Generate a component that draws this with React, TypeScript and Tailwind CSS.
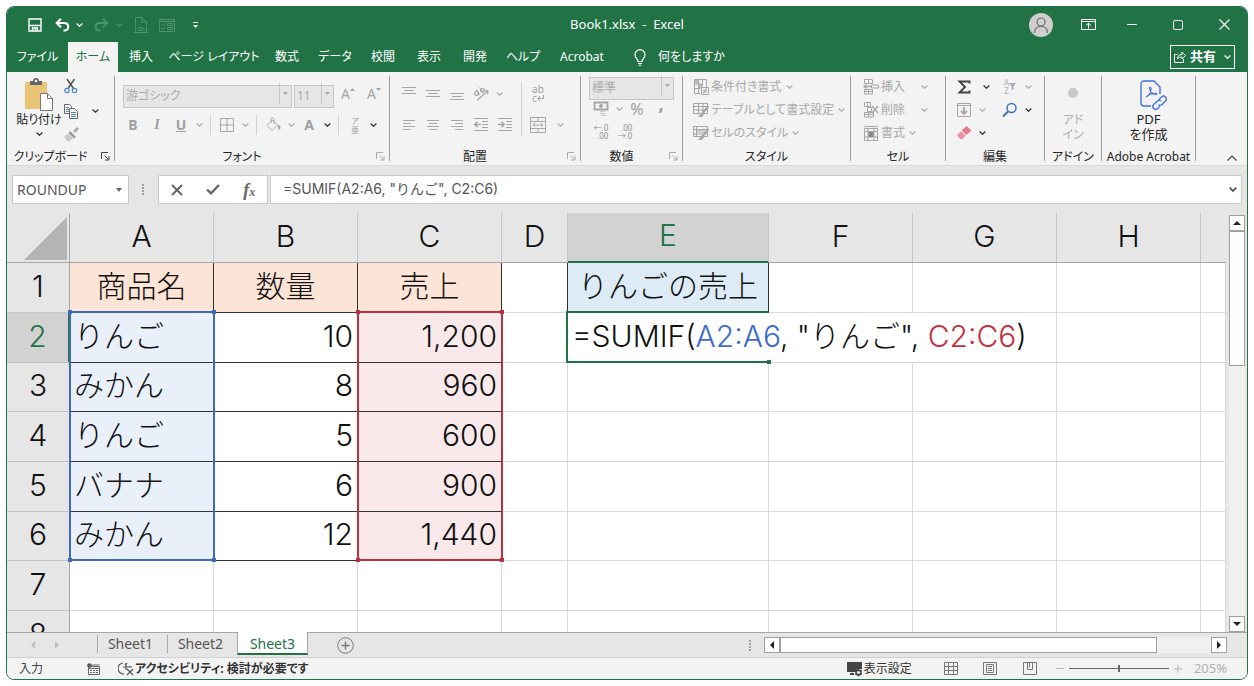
import { ReactNode } from 'react'
import clsx from 'clsx'

const menuTabs = [
  { label: 'ファイル', width: 'w-[61px]' },
  { label: 'ホーム', width: 'w-[50px]', active: true },
  { label: '挿入', width: 'w-[46px]' },
  { label: 'ページ レイアウト', width: 'w-[100px]' },
  { label: '数式', width: 'w-[46px]' },
  { label: 'データ', width: 'w-[50px]' },
  { label: '校閲', width: 'w-[46px]' },
  { label: '表示', width: 'w-[46px]' },
  { label: '開発', width: 'w-[46px]' },
  { label: 'ヘルプ', width: 'w-[50px]' },
  { label: 'Acrobat', width: 'w-[68px]' },
]

const columns = [
  { name: 'A', width: 'w-[144px]' },
  { name: 'B', width: 'w-[144px]' },
  { name: 'C', width: 'w-[144px]' },
  { name: 'D', width: 'w-[66px]' },
  { name: 'E', width: 'w-[201px]' },
  { name: 'F', width: 'w-[144px]' },
  { name: 'G', width: 'w-[144px]' },
  { name: 'H', width: 'w-[144px]' },
  { name: '', width: '' },
]

const items = [
  ['りんご', '10', '1,200'],
  ['みかん', '8', '960'],
  ['りんご', '5', '600'],
  ['バナナ', '6', '900'],
  ['みかん', '12', '1,440'],
]

function Chevron({ className = 'text-[#b0b0b0]' }: { className?: string }) {
  return (
    <svg className={clsx('h-1 w-[7px] shrink-0', className)} viewBox="0 0 7 4" fill="none" stroke="currentColor" strokeWidth="1.2">
      <path d="M.6.5 3.5 3.3 6.4.5" />
    </svg>
  )
}

function Icon({ children, className = 'text-[#a8a4a8]' }: { children: ReactNode; className?: string }) {
  return (
    <svg className={clsx('size-4 shrink-0', className)} viewBox="0 0 16 16" fill="none" stroke="currentColor">
      {children}
    </svg>
  )
}

/* Square ribbon button with only an icon in it */
function Tool({ label, children }: { label: string; children: ReactNode }) {
  return (
    <button aria-label={label} className="flex h-[23px] w-6 shrink-0 items-center justify-center">
      {children}
    </button>
  )
}

function More({ label, dark }: { label: string; dark?: boolean }) {
  return (
    <button aria-label={label} className="flex h-[23px] w-3 shrink-0 items-center justify-center">
      <Chevron className={dark ? 'text-[#333]' : 'text-[#b0b0b0]'} />
    </button>
  )
}

function Divider() {
  return (
    <span className="flex w-[10px] shrink-0 justify-center">
      <span className="h-5 w-px bg-[#d0d0d0]" />
    </span>
  )
}

function Combo({ label, value, className }: { label: string; value: string; className: string }) {
  return (
    <span className={clsx('relative block h-[23px] shrink-0', className)}>
      <select aria-label={label} className="h-full w-full appearance-none border border-[#c6c6c6] bg-[#e6e6e6] pl-0.5 text-xs text-[#aaa]">
        <option>{value}</option>
      </select>
      <span className="pointer-events-none absolute inset-y-px right-px flex w-3 items-center justify-center border-l border-[#c6c6c6]">
        <svg className="h-[3px] w-[5px]" viewBox="0 0 5 3" fill="#aaa">
          <path d="M0 0h5L2.5 3z" />
        </svg>
      </span>
    </span>
  )
}

function Launcher({ dark }: { dark?: boolean }) {
  return (
    <button aria-label="ダイアログを表示" className="absolute right-1 bottom-0">
      <svg className={clsx('size-[9px]', dark ? 'text-[#444]' : 'text-[#aaa]')} viewBox="0 0 9 9" fill="none" stroke="currentColor">
        <path d="M.5 7V.5H7M3.5 3.5l4 4M8 4v4H4" />
      </svg>
    </button>
  )
}

function Group({ title, className, launcher, children }: { title: string; className: string; launcher?: 'dark' | 'light'; children: ReactNode }) {
  return (
    <section className={clsx('mt-1 mb-1 flex shrink-0 flex-col justify-between border-r border-[#9a9a9a]', className)}>
      <div>{children}</div>
      <div className={clsx('relative flex h-2 items-center justify-center text-xs leading-3 whitespace-nowrap text-[#262626]', launcher && 'pr-5')}>
        {title}
        {launcher && <Launcher dark={launcher === 'dark'} />}
      </div>
    </section>
  )
}

function TitleBar() {
  return (
    <div className="grid h-[35px] grid-cols-[1fr_auto_1fr] items-center">
      <div className="flex items-center pl-5 text-white">
        <button aria-label="上書き保存" className="flex w-4 justify-center">
          <svg className="size-[14px]" viewBox="0 0 14 14" fill="none" stroke="currentColor" strokeWidth="1.4">
            <path d="M1 1h12v12H1zM1 7.5h12M4.5 13v-3h5v3M7.5 10.5V13" />
          </svg>
        </button>
        <button aria-label="元に戻す" className="ml-3 flex w-4 justify-center">
          <Icon className="text-white">
            <path d="M1.5 6H10a4 3.8 0 0 1 0 7.5H8.5M6 1.8 1.6 6 6 10.2" strokeWidth="2" />
          </Icon>
        </button>
        <button aria-label="元に戻す一覧" className="ml-0.5 flex w-3 justify-center">
          <Chevron className="text-white" />
        </button>
        <button aria-label="やり直し" className="ml-2 flex w-4 justify-center">
          <Icon className="text-[#4e9469]">
            <path d="M14.5 6H6a4 3.8 0 0 0 0 7.5h1.5M10 1.8 14.4 6 10 10.2" strokeWidth="1.8" />
          </Icon>
        </button>
        <button aria-label="やり直し一覧" className="ml-1 flex w-3 justify-center">
          <Chevron className="text-[#4e9469]" />
        </button>
        <button aria-label="印刷プレビュー" className="ml-2 flex w-4 justify-center">
          <Icon className="text-[#4e9469]">
            <path d="M2.5 9V.5H9L13.5 5v4M9 .5V5h4.5M2.5 10v5M13.5 10v5M1 15.5h14M6 10.5h4v3H6zM4 12h1M11 12h1" />
          </Icon>
        </button>
        <button aria-label="フォーム" className="ml-2.5 flex w-4 justify-center">
          <Icon className="text-[#4e9469]">
            <path d="M.5 2.5h15v12H.5zM.5 4.5h15M2.5 8h4M2.5 11.5h4M8.5 6.5h5v2h-5zM8.5 10.5h5v2h-5z" />
          </Icon>
        </button>
        <button aria-label="クイック アクセスのカスタマイズ" className="ml-3 flex w-4 justify-center">
          <svg className="h-[6px] w-[5px]" viewBox="0 0 5 6" fill="currentColor">
            <path d="M0 0h5v1H0zM0 3h5L2.5 6z" />
          </svg>
        </button>
      </div>
      <h1 className="text-[13px] whitespace-pre text-white">Book1.xlsx  -  Excel</h1>
      <div className="flex items-center justify-end text-white">
        <button aria-label="アカウント" className="mr-7 flex size-6 items-center justify-center rounded-full bg-[#cfcfcf]">
          <svg className="size-[18px] text-[#6b6b6b]" viewBox="0 0 18 18" fill="none" stroke="currentColor" strokeWidth="1.2">
            <circle cx="9" cy="6" r="4" />
            <path d="M2.5 17c0-4 2.5-6.5 6.5-6.5s6.5 2.5 6.5 6.5" />
          </svg>
        </button>
        <button aria-label="リボンの表示オプション" className="flex w-7 justify-start">
          <svg className="h-[11px] w-[15px]" viewBox="0 0 15 11" fill="none" stroke="currentColor">
            <path d="M.5.5h14v10H.5zM.5 2.5h14M7.5 9.5v-5M5 6.5l2.5-2.3L10 6.5" />
          </svg>
        </button>
        <button aria-label="最小化" className="flex w-[46px] justify-center">
          <span className="h-px w-[10px] bg-white" />
        </button>
        <button aria-label="最大化" className="flex w-[46px] justify-center">
          <span className="size-[10px] rounded-xs border border-white" />
        </button>
        <button aria-label="閉じる" className="flex w-[46px] justify-center">
          <svg className="size-[11px]" viewBox="0 0 11 11" stroke="currentColor" strokeWidth="1.2">
            <path d="M.5.5l10 10M10.5.5l-10 10" />
          </svg>
        </button>
      </div>
    </div>
  )
}

function MenuBar() {
  return (
    <nav className="flex h-[30px] items-stretch text-xs whitespace-nowrap text-white">
      {menuTabs.map((tab) => (
        <button
          key={tab.label}
          className={clsx('shrink-0', tab.width, tab.active && 'bg-[#f3f3f3] text-[#217346]')}
        >
          {tab.label}
        </button>
      ))}
      <button className="flex items-center gap-3 pl-[18px]">
        <svg className="h-[17px] w-3" viewBox="0 0 12 17" fill="none" stroke="currentColor" strokeWidth="1.2">
          <path d="M4 12.5c0-2.5-3-3.5-3-6.8a5 5 0 0 1 10 0c0 3.3-3 4.3-3 6.8zM4 14.5h4M4.8 16.4h2.4" />
        </svg>
        何をしますか
      </button>
      <button className="my-[3px] mr-3 ml-auto flex items-center gap-1 border border-white px-[3px] text-[13px] font-bold">
        <svg className="size-3" viewBox="0 0 12 12" fill="none" stroke="currentColor">
          <path d="M3.5 3.5h-3v8h9V8M3.5 8c0-3 1.5-4.5 4.5-4.5V1l3.5 3.5L8 8V6C6 6 4.5 6.5 3.5 8z" />
        </svg>
        共有
        <span className="pl-1">
          <Chevron className="text-white" />
        </span>
      </button>
    </nav>
  )
}

function ClipboardGroup() {
  return (
    <Group title="クリップボード" className="w-[108px]" launcher="dark">
      <div className="flex">
        <button className="flex w-14 flex-col items-center pt-0.5 pl-2 text-xs leading-[18px] whitespace-nowrap text-[#262626]">
          <svg className="h-[33px] w-7" viewBox="0 0 28 33" fill="none">
            <path d="M0 4h22v27H0z" fill="#ebc577" />
            <path d="M5 3h3a3 3 0 0 1 6 0h3v4H5z" fill="#666" />
            <circle cx="11" cy="3" r="1.2" fill="#fff" />
            <path d="M15.5 15.5h7l5 5v12h-12z" fill="#fff" stroke="#777" />
            <path d="M22.5 15.5v5h5" stroke="#777" />
          </svg>
          貼り付け
          <span className="flex h-2.5 items-center">
            <Chevron className="text-[#333]" />
          </span>
        </button>
        <div className="flex h-[69px] w-4 flex-col justify-between py-0.5">
          <button aria-label="切り取り">
            <Icon>
              <path d="M4 1l6.5 9.5M11.5 1 5 10.5" stroke="#555" strokeWidth="1.5" />
              <circle cx="4" cy="12.5" r="2.2" stroke="#4a86c5" strokeWidth="1.2" />
              <circle cx="11.5" cy="12.5" r="2.2" stroke="#4a86c5" strokeWidth="1.2" />
            </Icon>
          </button>
          <button aria-label="コピー">
            <Icon>
              <path d="M1.5 1.5h5l2 2v7h-7z" stroke="#666" fill="#fff" />
              <path d="M6.5 5.5h5l3 3v7h-8z" stroke="#666" fill="#fff" />
              <path d="M3 4.5h3M3 6.5h3M3 8.5h3M8 9.5h5M8 11.5h5M8 13.5h5" stroke="#4a86c5" />
            </Icon>
          </button>
          <button aria-label="書式のコピー/貼り付け">
            <Icon>
              <path d="M15 1l-4 4" stroke="#aaa" strokeWidth="2.5" />
              <path d="M7 4l6 6-2 1.5L5.5 6z" fill="#999" stroke="none" />
              <path d="M5 6.5 10 11.5 5 15 1 10z" fill="#c9c9c9" stroke="none" />
            </Icon>
          </button>
        </div>
        <div className="flex h-[69px] items-center pl-2.5">
          <More label="コピーのオプション" dark />
        </div>
      </div>
    </Group>
  )
}

function FontGroup() {
  return (
    <Group title="フォント" className="w-[275px]" launcher="light">
      <div className="flex gap-0.5 pt-1.5 pl-2">
        <Combo label="フォント" value="游ゴシック" className="w-[169px]" />
        <Combo label="フォント サイズ" value="11" className="w-10" />
        <Tool label="フォント サイズの拡大">
          <span className="text-sm text-[#a5a5a5]">A</span>
          <svg className="mb-2 h-[3px] w-[5px]" viewBox="0 0 5 3" fill="#a5a5a5"><path d="M0 3h5L2.5 0z" /></svg>
        </Tool>
        <Tool label="フォント サイズの縮小">
          <span className="text-sm text-[#a5a5a5]">A</span>
          <svg className="mb-2 h-[3px] w-[5px]" viewBox="0 0 5 3" fill="#a5a5a5"><path d="M0 0h5L2.5 3z" /></svg>
        </Tool>
      </div>
      <div className="flex items-center pt-2 pl-1.5 text-sm text-[#a0a0a0]">
        <Tool label="太字"><b>B</b></Tool>
        <Tool label="斜体"><i className="font-['Liberation_Serif',serif] font-bold">I</i></Tool>
        <Tool label="下線"><b className="underline">U</b></Tool>
        <More label="下線の種類" />
        <Divider />
        <Tool label="罫線">
          <Icon><path d="M1.5 1.5h13v13h-13zM8 1.5v13M1.5 8h13" /></Icon>
        </Tool>
        <More label="罫線の種類" />
        <Divider />
        <Tool label="塗りつぶしの色">
          <Icon>
            <path d="M2 8.5 7.5 3l5 5L7 13.5zM6 6V2.5a1.5 1.5 0 0 1 3 0V7" />
            <path d="M14 8c1 2 1.5 3 .5 4s-2-.5-.5-4z" fill="currentColor" />
          </Icon>
        </Tool>
        <More label="塗りつぶしの色の一覧" />
        <Tool label="フォントの色"><b>A</b></Tool>
        <More label="フォントの色の一覧" dark />
        <Divider />
        <Tool label="ふりがなの表示">
          <span className="flex flex-col text-[8px] leading-[9px]"><span>ア</span><span>亜</span></span>
        </Tool>
        <More label="ふりがなの設定" dark />
      </div>
    </Group>
  )
}

function AlignGroup() {
  return (
    <Group title="配置" className="w-[191px]" launcher="light">
      <div className="flex pt-1.5 pl-[7px]">
        <div className="w-[124px]">
          <div className="flex">
            <Tool label="上揃え"><Icon><path d="M1 1.5h14M3 4.5h10M1 7.5h14" /></Icon></Tool>
            <Tool label="上下中央揃え"><Icon><path d="M1 4.5h14M3 7.5h10M1 10.5h14" /></Icon></Tool>
            <Tool label="下揃え"><Icon><path d="M1 7.5h14M3 10.5h10M1 13.5h14" /></Icon></Tool>
            <Tool label="方向">
              <Icon>
                <path d="M4 14.5 14.5 5M10.5 4.5h4.2v4" strokeWidth="1.2" />
                <circle cx="3.5" cy="7.5" r="2" strokeWidth="1.2" />
                <path d="M6.5 8.5l-3-5M6.5 1.5l3.5 5" strokeWidth="1.2" />
                <circle cx="9.5" cy="4.5" r="1.8" strokeWidth="1.2" />
              </Icon>
            </Tool>
            <More label="方向の一覧" />
          </div>
          <div className="flex pt-2">
            <Tool label="左揃え"><Icon><path d="M2 3.5h12M2 6.5h8M2 9.5h12M2 12.5h8" /></Icon></Tool>
            <Tool label="中央揃え"><Icon><path d="M2 3.5h12M4 6.5h8M2 9.5h12M4 12.5h8" /></Icon></Tool>
            <Tool label="右揃え"><Icon><path d="M2 3.5h12M6 6.5h8M2 9.5h12M6 12.5h8" /></Icon></Tool>
            <Tool label="インデントを減らす">
              <Icon>
                <path d="M1 1.5h14M9 4.5h6M9 7.5h6M9 10.5h6M1 13.5h14" />
                <path d="M8 7.5H2M4.5 4.8 1.8 7.5l2.7 2.7" strokeWidth="1.6" />
              </Icon>
            </Tool>
            <Tool label="インデントを増やす">
              <Icon>
                <path d="M1 1.5h14M9 4.5h6M9 7.5h6M9 10.5h6M1 13.5h14" />
                <path d="M1 7.5h6M4.5 4.8 7.2 7.5l-2.7 2.7" strokeWidth="1.6" />
              </Icon>
            </Tool>
          </div>
        </div>
        <span className="h-[54px] w-px bg-[#d0d0d0]" />
        <div className="pl-1">
          <Tool label="折り返して全体を表示する">
            <span className="flex flex-col text-[10px] leading-[9px] text-[#a0a0a0]">
              <span>ab</span>
              <span className="flex items-center">
                c
                <svg className="h-[6px] w-[7px]" viewBox="0 0 7 6" fill="none" stroke="currentColor">
                  <path d="M6.5 0v3.5H1M3 1 .8 3.5 3 6" />
                </svg>
              </span>
            </span>
          </Tool>
          <div className="flex gap-1 pt-2">
            <Tool label="セルを結合して中央揃え">
              <Icon>
                <path d="M.5.5h15v15H.5zM.5 4.5h15M.5 11.5h15M8 .5v4M8 11.5v4M3 8h10M5 6 3 8l2 2M11 6l2 2-2 2" />
              </Icon>
            </Tool>
            <More label="セルの結合の一覧" />
          </div>
        </div>
      </div>
    </Group>
  )
}

function NumberGroup() {
  return (
    <Group title="数値" className="w-[102px]" launcher="light">
      <div className="-mt-0.5 pl-2">
        <Combo label="表示形式" value="標準" className="w-[85px]" />
        <div className="flex text-base text-[#a0a0a0]">
          <Tool label="通貨表示形式">
            <Icon>
              <path d="M1.5 1.5h13v7h-13z" strokeWidth="1.8" />
              <circle cx="8" cy="5" r="1.5" fill="currentColor" />
              <path d="M7 10.5h5M7 12.5h5M8 14.5h5" stroke="#c8c8c8" />
            </Icon>
          </Tool>
          <More label="通貨の一覧" />
          <Tool label="パーセント スタイル">%</Tool>
          <Tool label="桁区切りスタイル"><b className="pb-3 text-xl">,</b></Tool>
        </div>
        <div className="flex text-[8px] leading-[8px] text-[#909090]">
          <Tool label="小数点以下の表示桁数を増やす"><span className="text-right">←.0<br />.00</span></Tool>
          <Tool label="小数点以下の表示桁数を減らす"><span className="text-right">.00<br />→.0</span></Tool>
        </div>
      </div>
    </Group>
  )
}

function WideTool({ icon, label, wideGap }: { icon: ReactNode; label: string; wideGap?: boolean }) {
  return (
    <button className={clsx('flex h-[23px] items-center text-xs whitespace-nowrap text-[#a8a8a8]', wideGap ? 'gap-4' : 'gap-1')}>
      <span className="flex items-center gap-0.5">
        {icon}
        {label}
      </span>
      <Chevron />
    </button>
  )
}

function StyleGroup() {
  return (
    <Group title="スタイル" className="w-[168px]">
      <div className="-mt-px pl-2.5">
        <WideTool
          label="条件付き書式"
          icon={<Icon><path d="M1.5.5h12v7M1.5.5v14h6M1.5 5h7M1.5 9.5h6M5.5.5v14M9.5.5V7" /><path d="M2 1h3v4H2zM6 5h3v4H6z" fill="#bbb" stroke="none" /><path d="M8.5 8.5h7v7h-7zM10 11h4M10 13h4M13.5 9.5l-3 5" /></Icon>}
        />
        <WideTool
          label="テーブルとして書式設定"
          icon={<Icon><path d="M.5 1.5h14v10H.5zM.5 4.5h14M.5 8h14M5.5 1.5v10M10 1.5v10" /><path d="M15.5 4 10 10.5" strokeWidth="2" /><path d="M10 9l2 2-3 4H5z" fill="#a8a8a8" stroke="none" /></Icon>}
        />
        <WideTool
          label="セルのスタイル"
          icon={<Icon><path d="M.5 1.5h14v10H.5zM.5 4.5h14M.5 9h14M3.5 1.5v10" /><path d="M4 5h8v4H4z" fill="#d0d0d0" stroke="none" /><path d="M15.5 4 10 10.5" strokeWidth="2" /><path d="M10 9l2 2-3 4H5z" fill="#a8a8a8" stroke="none" /></Icon>}
        />
      </div>
    </Group>
  )
}

function CellGroup() {
  return (
    <Group title="セル" className="w-[95px]">
      <div className="-mt-px pl-3">
        <WideTool
          wideGap
          label="挿入"
          icon={<Icon><path d="M1.5.5h8v4h-8zM5.5.5v4M1.5 10.5h8V15h-8zM1.5 12.5h8M5.5 10.5V15M8.5 6h7v3h-7z" /><path d="M8 7.5H1M3.5 5.5l-2.5 2 2.5 2" strokeWidth="1.3" /></Icon>}
        />
        <WideTool
          wideGap
          label="削除"
          icon={<Icon><path d="M1.5.5h6v4h-6zM4.5.5v4M1.5 10.5h9V15h-9zM1.5 12.5h9M5.5 10.5V15M4.5 5.5h4v4h-4z" /><path d="M9 4l6 7M15 4 9 11" strokeWidth="1.4" /></Icon>}
        />
        <WideTool
          label="書式"
          icon={<Icon><path d="M1.5 3.5h13v12h-13zM1.5 6.5h13M1.5 12h13M5 3.5v12M11 3.5v12M2 .5v2M14 .5v2M3 1.5h10" /><path d="M5.5 7h5v5h-5z" fill="#888" stroke="none" /></Icon>}
        />
      </div>
    </Group>
  )
}

function EditGroup() {
  return (
    <Group title="編集" className="w-[99px]">
      <div className="-mt-px grid grid-cols-[46px_1fr] pl-1.5">
        <div className="flex">
          <Tool label="オート SUM">
            <Icon className="text-[#444]"><path d="M13.5 4.5v-2h-10L9 8l-5.5 5.5h10v-2" strokeWidth="1.9" /></Icon>
          </Tool>
          <span className="pl-1"><More label="集計方法" dark /></span>
        </div>
        <div className="flex">
          <Tool label="並べ替えとフィルター">
            <span className="flex items-center text-[8px] leading-[8px] text-[#aaa]">
              <span>A<br />Z</span>
              <svg className="size-[7px]" viewBox="0 0 7 7" fill="currentColor"><path d="M0 0h7L4.5 3v4l-2-1V3z" /></svg>
            </span>
          </Tool>
          <More label="並べ替えの一覧" />
        </div>
        <div className="flex">
          <Tool label="フィル"><Icon><path d="M1.5 1.5h13v13h-13zM1.5 3.5h13" /><path d="M8 5v7M5 9l3 3 3-3" strokeWidth="1.8" /></Icon></Tool>
          <More label="フィルの一覧" />
        </div>
        <div className="flex">
          <Tool label="検索と選択">
            <Icon className="text-[#3d73b5]"><circle cx="9.5" cy="6" r="4.5" strokeWidth="1.5" /><path d="M6 9.5l-5 5" strokeWidth="2" /></Icon>
          </Tool>
          <More label="検索の一覧" dark />
        </div>
        <div className="flex">
          <Tool label="クリア">
            <Icon><path d="M10.5 1l5 4.5-5 4.5-5-4.5z" fill="#e4798f" stroke="none" /><path d="M4.7 6.2l5 4.5-3.2 3.3h-2L1 10.5z" fill="#e98fa1" stroke="none" /></Icon>
          </Tool>
          <More label="クリアの一覧" dark />
        </div>
      </div>
    </Group>
  )
}

function Ribbon() {
  return (
    <div className="flex h-[93px] shrink-0 overflow-hidden bg-[#f3f3f3]">
      <ClipboardGroup />
      <FontGroup />
      <AlignGroup />
      <NumberGroup />
      <StyleGroup />
      <CellGroup />
      <EditGroup />
      <Group title="アドイン" className="w-[57px]">
        <button className="flex w-full flex-col items-center text-xs leading-[15px] text-[#b0b0b0]">
          <span className="mt-3 mb-3.5 size-[10px] rounded-full bg-[#c8c8c8]" />
          アド<br />イン
        </button>
      </Group>
      <Group title="Adobe Acrobat" className="w-[94px]">
        <button className="flex w-full flex-col items-center pt-1 text-[13px] leading-[15px] text-[#262626]">
          <svg className="mb-0.5 ml-2 h-[30px] w-7" viewBox="0 0 28 30" fill="none" stroke="#3f6fe0" strokeWidth="1.4">
            <path d="M12 26H5a3 3 0 0 1-3-3V4a3 3 0 0 1 3-3h10l6 6v7M15 1" />
            <path d="M7 17c3-1 6-6 5-9-.3-1-1.500-1-1.500 0 0 3 3 6.500 6.500 6.500 1 0 1-1.300 0-1.300-3.500 0-7 1-10 3.800z" strokeWidth="1.1" />
            <path d="M20 19.5l2.500-2.500a2.800 2.800 0 0 1 4 4L23 24.500a2.800 2.800 0 0 1-3.500.3M22 21a2.800 2.800 0 0 0-3.800.3L14.700 24.500a2.800 2.800 0 0 0 4 4l2-2" />
          </svg>
          PDF<br />を作成
        </button>
      </Group>
      <div className="flex flex-1 items-end justify-end pr-2.5 pb-1">
        <button aria-label="リボンを折りたたむ">
          <svg className="h-[6px] w-[10px]" viewBox="0 0 10 6" fill="none" stroke="#444" strokeWidth="1.2">
            <path d="M.5 5.5 5 1l4.5 4.5" />
          </svg>
        </button>
      </div>
    </div>
  )
}

function Dots() {
  return (
    <svg className="h-[11px] w-[3px] shrink-0" viewBox="0 0 3 11" fill="#a0a0a0">
      <path d="M0 0h2v2H0zM0 3h2v2H0zM0 6h2v2H0zM0 9h2v2H0z" />
    </svg>
  )
}

function FormulaBar() {
  return (
    <div className="flex h-12 shrink-0 items-start border-t border-[#dadada] bg-[#e6e6e6] px-[5px] pt-[9px]">
      <div className="flex h-[29px] w-[117px] items-center border border-[#c8c8c8] bg-white pr-1.5">
        <input
          aria-label="名前ボックス"
          defaultValue="ROUNDUP"
          className="w-full min-w-0 pl-1 text-sm text-[#555] outline-none"
        />
        <svg className="h-1 w-[6px] shrink-0" viewBox="0 0 6 4" fill="#666"><path d="M0 0h6L3 4z" /></svg>
      </div>
      <div className="flex h-[29px] w-[29px] items-center justify-center">
        <Dots />
      </div>
      <div className="flex h-[29px] w-[110px] items-center justify-around border border-[#c8c8c8] bg-white">
        <button aria-label="キャンセル">
          <svg className="size-3" viewBox="0 0 12 12" stroke="#666" strokeWidth="2"><path d="M1 1l10 10M11 1 1 11" /></svg>
        </button>
        <button aria-label="入力">
          <svg className="h-[11px] w-[14px]" viewBox="0 0 14 11" fill="none" stroke="#666" strokeWidth="2.4"><path d="M1 5.5 5 9.3 13 1" /></svg>
        </button>
        <button aria-label="関数の挿入" className="font-['Liberation_Serif',serif] text-lg leading-5 font-bold text-[#666] italic">
          f<span className="text-xs">x</span>
        </button>
      </div>
      <div className="ml-0.5 flex h-[29px] flex-1 items-center border border-[#c8c8c8] bg-white pr-1">
        <input
          aria-label="数式バー"
          defaultValue={'=SUMIF(A2:A6, "りんご", C2:C6)'}
          className="w-full min-w-0 pb-0.5 pl-3 font-['Inter','Noto_Sans_CJK_JP',sans-serif] text-sm text-[#555] outline-none [font-feature-settings:normal]"
        />
        <button aria-label="数式バーの展開">
          <svg className="h-[5px] w-2" viewBox="0 0 8 5" fill="none" stroke="#555" strokeWidth="1.8"><path d="M.7.7 4 4 7.3.7" /></svg>
        </button>
      </div>
    </div>
  )
}

/* Coloured frame round a referenced range, with a handle on its corners */
function RangeFrame({ frame, handle }: { frame: string; handle: string }) {
  return (
    <span className={clsx('pointer-events-none absolute -top-0.5 -left-px h-[250px] w-[146px] border-2', frame)}>
      <i className={clsx('absolute -top-[3px] -left-[3px] size-1', handle)} />
      <i className={clsx('absolute -top-[3px] -right-[3px] size-1', handle)} />
      <i className={clsx('absolute -bottom-[3px] -left-[3px] size-1', handle)} />
      <i className={clsx('absolute -right-[3px] -bottom-[3px] size-1', handle)} />
    </span>
  )
}

function RowHead({ n, active }: { n: number; active?: boolean }) {
  return (
    <th
      scope="row"
      className={clsx(
        'border-r border-b border-b-[#c4c4c4] p-0 pb-1 text-center font-light',
        active ? 'border-r-2 border-r-[#217346] bg-[#d2d2d2] text-[#217346]' : 'border-r-[#a6a6a6] bg-[#e6e6e6]'
      )}
    >
      {n}
    </th>
  )
}

function Blank({ count }: { count: number }) {
  return (
    <>
      {Array.from({ length: count }, (_, i) => (
        <td key={i} className="border-r border-b border-[#d9d9d9]" />
      ))}
    </>
  )
}

function Sheet() {
  return (
    <div className="min-w-0 flex-1 overflow-hidden bg-[#e6e6e6]">
      <table className="w-full table-fixed border-separate border-spacing-0 bg-white text-[30px] leading-10 font-light text-[#111]">
        <colgroup>
          <col className="w-[63px]" />
          {columns.map((col, i) => (
            <col key={i} className={col.width} />
          ))}
        </colgroup>
        <thead>
          <tr className="h-[50px] bg-[#e6e6e6]">
            <th className="border-r border-b border-[#a6a6a6] p-0">
              <button aria-label="すべて選択" className="flex h-[49px] w-full items-end justify-end pr-0.5 pb-0.5">
                <svg className="size-[43px]" viewBox="0 0 43 43" fill="#b4b4b4"><path d="M43 0v43H0z" /></svg>
              </button>
            </th>
            {columns.map((col, i) => (
              <th
                key={i}
                scope="col"
                className={clsx(
                  'p-0 pb-1 text-center font-light',
                  col.name === 'E' ? 'border-r border-b-2 border-r-[#c4c4c4] border-b-[#217346] bg-[#d2d2d2] text-[#217346]' : 'border-b border-b-[#a6a6a6]',
                  col.name !== 'E' && col.name !== '' && 'border-r border-r-[#c4c4c4]'
                )}
              >
                {col.name}
              </th>
            ))}
          </tr>
        </thead>
        <tbody className="[&_td]:p-0 [&_td]:pb-1 [&>tr]:h-[50px] [&>tr:nth-child(3n)]:h-[49px]">
          <tr>
            <RowHead n={1} />
            <td className="border-r border-b border-[#333] bg-[#fce4d6] text-center">商品名</td>
            <td className="border-r border-b border-[#333] bg-[#fce4d6] text-center">数量</td>
            <td className="border-r border-b border-[#333] bg-[#fce4d6] text-center">売上</td>
            <td className="border-r border-b border-r-[#333] border-b-[#d9d9d9]" />
            <td className="border-r border-b border-[#333] bg-[#ddebf7] text-center whitespace-nowrap">りんごの売上</td>
            <Blank count={4} />
          </tr>
          {items.map(([name, amount, sales], i) => (
            <tr key={i}>
              <RowHead n={i + 2} active={i === 0} />
              <td className={clsx('border-r border-b border-[#333] bg-[#e9f0fa]', i === 0 && 'relative')}>
                <span className="pl-1">{name}</span>
                {i === 0 && <RangeFrame frame="border-[#3f6bbd]" handle="bg-[#3f6bbd]" />}
              </td>
              <td className="border-r border-b border-[#333] text-right">
                <span className="pr-1">{amount}</span>
              </td>
              <td className={clsx('border-r border-b border-[#333] bg-[#f9e9ea] text-right', i === 0 && 'relative')}>
                <span className="pr-1">{sales}</span>
                {i === 0 && <RangeFrame frame="border-[#b8323f]" handle="bg-[#b8323f]" />}
              </td>
              <Blank count={1} />
              {i === 0 ? (
                <>
                  <td colSpan={3} className="relative border-r border-b border-[#d9d9d9] whitespace-nowrap">
                    <span className="pl-1">
                      =SUMIF(<span className="text-[#3f6bc8]">A2:A6</span>, "りんご", <span className="text-[#c0323f]">C2:C6</span>)
                    </span>
                    <span className="pointer-events-none absolute -top-0.5 -left-0.5 h-[52px] w-[203px] border-2 border-r-0 border-[#217346]">
                      <i className="absolute -right-0.5 -bottom-[3px] size-1 bg-[#217346]" />
                    </span>
                  </td>
                  <Blank count={2} />
                </>
              ) : (
                <Blank count={5} />
              )}
            </tr>
          ))}
          <tr>
            <RowHead n={7} />
            <Blank count={9} />
          </tr>
          <tr>
            <RowHead n={8} />
            <Blank count={9} />
          </tr>
        </tbody>
      </table>
    </div>
  )
}

function Arrow({ d }: { d: string }) {
  return (
    <svg className="size-2" viewBox="0 0 8 8" fill="#222">
      <path d={d} />
    </svg>
  )
}

function SheetTabs() {
  return (
    <div className="flex h-[25px] shrink-0 items-stretch border-t border-[#a6a6a6] bg-[#e6e6e6] text-sm text-[#555]">
      <div className="flex w-[90px] items-center gap-4 pl-[22px]">
        <button aria-label="前のシート">
          <svg className="size-2" viewBox="0 0 8 8" fill="#bdbdbd"><path d="M6 0v8L2 4z" /></svg>
        </button>
        <button aria-label="次のシート">
          <svg className="size-2" viewBox="0 0 8 8" fill="#bdbdbd"><path d="M2 0v8l4-4z" /></svg>
        </button>
      </div>
      {['Sheet1', 'Sheet2'].map((name) => (
        <button key={name} className="mt-0.5 mb-1 w-[70px] border-l border-[#a6a6a6] pr-1 leading-[18px]">{name}</button>
      ))}
      <button className="-mt-px mb-0.5 w-[71px] border-r border-b-2 border-l border-r-[#a6a6a6] border-b-[#217346] border-l-[#a6a6a6] bg-white pt-0.5 leading-[18px] text-[#217346]">
        Sheet3
      </button>
      <button aria-label="新しいシート" className="ml-[29px]">
        <svg className="size-[17px]" viewBox="0 0 17 17" fill="none" stroke="#777">
          <circle cx="8.5" cy="8.5" r="7.8" />
          <path d="M8.5 4.5v8M4.5 8.5h8" strokeWidth="1.4" />
        </svg>
      </button>
      <div className="ml-auto flex w-[498px] items-center">
        <Dots />
        <div className="ml-3 flex h-4 flex-1 bg-[#f0f0f0]">
          <button aria-label="左へスクロール" className="flex w-4 items-center justify-center border border-[#a0a0a0] bg-white">
            <Arrow d="M6 0v8L2 4z" />
          </button>
          <div className="w-[377px] border border-[#a0a0a0] bg-white" />
          <button aria-label="右へスクロール" className="ml-auto flex w-4 items-center justify-center border border-[#a0a0a0] bg-white">
            <Arrow d="M2 0v8l4-4z" />
          </button>
        </div>
        <div className="w-5" />
      </div>
    </div>
  )
}

function StatusBar() {
  return (
    <footer className="flex h-[22px] shrink-0 items-center border-t border-[#d0d0d0] bg-[#f3f3f3] text-xs whitespace-nowrap text-[#444]">
      <span className="w-[80px] pl-3">入力</span>
      <button aria-label="マクロの記録">
        <svg className="h-3 w-[13px]" viewBox="0 0 13 12" fill="none" stroke="#666">
          <path d="M1.5 3.5h11v8h-11zM1.5 5.5h11M3 7.5h2M6 7.5h2M9 7.5h2M3 9.5h2M6 9.5h2M9 9.5h2M5 2h7.5" />
          <circle cx="2.5" cy="2.5" r="2.3" fill="#555" stroke="none" />
        </svg>
      </button>
      <button className="ml-[18px] flex items-center font-bold text-[#333]">
        <svg className="h-[14px] w-[17px]" viewBox="0 0 17 14" fill="none" stroke="#555" strokeWidth="1.2">
          <path d="M5 1a5.5 5.5 0 0 0 1 11M7 3l2-2M8 1v7M5 5h7M11 4.5l3 .5M9 7l6 6M15 7l-6 6" />
        </svg>
        アクセシビリティ: 検討が必要です
      </button>
      <button className="ml-auto flex items-center gap-px text-[#333]">
        <svg className="size-4" viewBox="0 0 16 16" fill="none">
          <path d="M0 1h15v7h-4l-3 3H0zM3 12h4v2H3z" fill="#444" />
          <circle cx="11.5" cy="11.5" r="2.5" stroke="#444" strokeWidth="1.5" />
          <path d="M11.5 7.5v8M8 9.5l7 4M15 9.5l-7 4" stroke="#444" />
          <circle cx="11.5" cy="11.5" r="1.3" fill="#fff" />
        </svg>
        表示設定
      </button>
      <button aria-label="標準" className="ml-8">
        <svg className="h-[13px] w-[14px]" viewBox="0 0 14 13" fill="none" stroke="#777"><path d="M.5.5h13v12H.5zM.5 4.5h13M.5 8.5h13M4.5.5v12M9.5.5v12" /></svg>
      </button>
      <button aria-label="ページ レイアウト" className="ml-[25px]">
        <svg className="h-[13px] w-[14px]" viewBox="0 0 14 13" fill="none" stroke="#777"><path d="M.5.5h13v12H.5zM3.5 2.5h7v8h-7zM5 4.5h4M5 6.5h4M5 8.5h4" /></svg>
      </button>
      <button aria-label="改ページ プレビュー" className="ml-[26px]">
        <svg className="h-[13px] w-[14px]" viewBox="0 0 14 13" fill="none" stroke="#777"><path d="M.5.5h13v12H.5zM4.5.5v7h5v-7M6.5.5v5" /></svg>
      </button>
      <button aria-label="縮小" className="ml-[19px] h-px w-2 bg-[#b5b5b5]" />
      <input
        type="range"
        aria-label="ズーム"
        defaultValue={50}
        className="mx-[5px] h-3 w-[100px] appearance-none bg-transparent [&::-webkit-slider-runnable-track]:h-px [&::-webkit-slider-runnable-track]:bg-[#666] [&::-webkit-slider-thumb]:-mt-[3px] [&::-webkit-slider-thumb]:h-[7px] [&::-webkit-slider-thumb]:w-0.5 [&::-webkit-slider-thumb]:appearance-none [&::-webkit-slider-thumb]:bg-[#666]"
      />
      <button aria-label="拡大">
        <svg className="size-2" viewBox="0 0 8 8" stroke="#b5b5b5"><path d="M4 0v8M0 4h8" /></svg>
      </button>
      <span className="mr-5 ml-3 text-[13px] text-[#b0b0b0]">205%</span>
    </footer>
  )
}

export default function App() {
  return (
    <div className="h-screen bg-white p-1.5 font-['Noto_Sans','Noto_Sans_CJK_JP',sans-serif] [font-feature-settings:'palt']">
      <div className="flex h-full flex-col overflow-hidden rounded-lg border border-[#217346] bg-[#e6e6e6]">
        <header className="shrink-0 bg-[#217346]">
          <TitleBar />
          <MenuBar />
        </header>
        <Ribbon />
        <FormulaBar />
        <main className="flex min-h-0 flex-1 font-['Inter','Noto_Sans_CJK_JP',sans-serif] [font-feature-settings:normal]">
          <Sheet />
          <div className="flex w-[21px] shrink-0 justify-center pt-0.5">
            <div className="flex w-4 flex-col bg-[#f0f0f0]">
              <button aria-label="上へスクロール" className="flex h-4 items-center justify-center border border-[#a0a0a0] bg-white">
                <Arrow d="M0 6h8L4 2z" />
              </button>
              <div className="h-[135px] border border-[#a0a0a0] bg-white" />
              <button aria-label="下へスクロール" className="mt-auto flex h-4 items-center justify-center border border-[#a0a0a0] bg-white">
                <Arrow d="M0 2h8L4 6z" />
              </button>
            </div>
          </div>
        </main>
        <SheetTabs />
        <StatusBar />
      </div>
    </div>
  )
}
